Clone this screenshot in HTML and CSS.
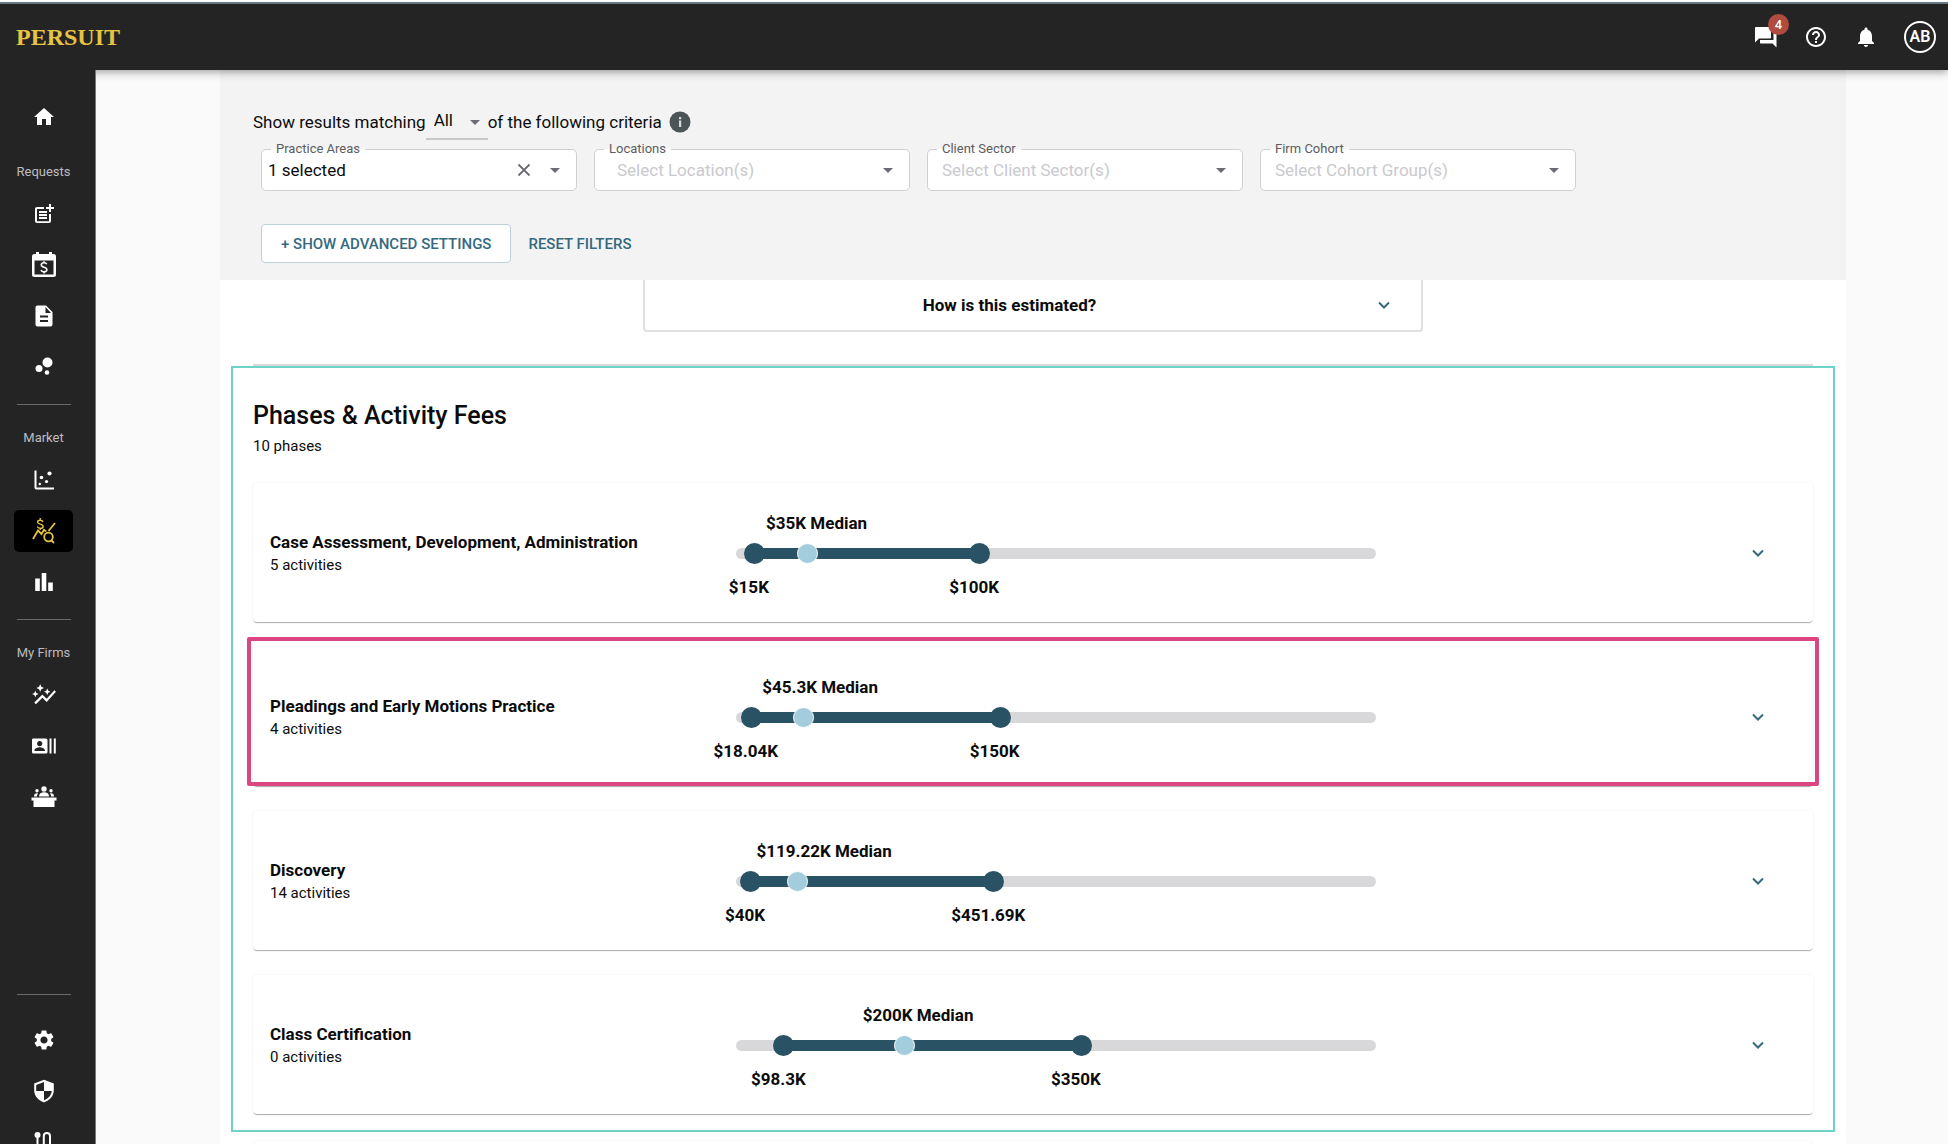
FILE: index.html
```html
<!DOCTYPE html>
<html lang="en">
<head>
<meta charset="utf-8">
<meta name="viewport" content="width=device-width, initial-scale=1">
<title>Persuit – Market Rates</title>
<link rel="stylesheet" href="styles.css">
</head>
<body>
<svg class="sprite" aria-hidden="true">
  <symbol id="chevron" viewBox="0 0 24 24"><path d="M6 9l6 6 6-6" fill="none" stroke="currentColor" stroke-width="2.4"/></symbol>
  <symbol id="arrow" viewBox="0 0 24 24"><path d="M7 10l5 5 5-5z"/></symbol>
</svg>
<div class="app">
  <header class="topbar">
    <a class="logo" href="#">PERSUIT</a>
    <div class="actions">
      <button class="icon-btn" type="button" aria-label="Messages">
        <svg viewBox="0 0 24 24"><path d="M21.500 6h-2v9H6v2.500c0 .550.450 1 1 1h11.500l4 4V7c0-.550-.450-1-1-1zM17 12.500V3c0-.550-.450-1-1-1H2c-.550 0-1 .450-1 1v14.500l4-4h11c.550 0 1-.450 1-1z"/></svg>
        <span class="badge">4</span>
      </button>
      <button class="icon-btn" type="button" aria-label="Help">
        <svg viewBox="0 0 24 24"><path d="M11 18h2v-2h-2v2zm1-16C6.480 2 2 6.480 2 12s4.480 10 10 10 10-4.480 10-10S17.520 2 12 2zm0 18c-4.410 0-8-3.590-8-8s3.590-8 8-8 8 3.590 8 8-3.590 8-8 8zm0-14c-2.210 0-4 1.790-4 4h2c0-1.100.900-2 2-2s2 .900 2 2c0 2-3 1.750-3 5h2c0-2.250 3-2.500 3-5 0-2.210-1.790-4-4-4z"/></svg>
      </button>
      <button class="icon-btn" type="button" aria-label="Notifications">
        <svg viewBox="0 0 24 24"><path d="M12 22c1.100 0 2-.900 2-2h-4c0 1.100.890 2 2 2zm6-6v-5c0-3.070-1.640-5.640-4.500-6.320V4c0-.830-.670-1.500-1.500-1.500s-1.500.670-1.500 1.500v.680C7.630 5.360 6 7.920 6 11v5l-2 2v1h16v-1l-2-2z"/></svg>
      </button>
      <button class="avatar" type="button" aria-label="Account">AB</button>
    </div>
  </header>

  <nav class="sidebar" aria-label="Main">
    <a class="nav-item" href="#" aria-label="Home"><svg viewBox="0 0 24 24"><path d="M10 20v-6h4v6h5v-8h3L12 3 2 12h3v8z"/></svg></a>
    <p class="nav-label">Requests</p>
    <div class="nav-group">
      <a class="nav-item" href="#" aria-label="New request"><svg viewBox="0 0 24 24"><path d="M17 19.220H5V7h7V5H5c-1.100 0-2 .900-2 2v12c0 1.100.900 2 2 2h12c1.100 0 2-.900 2-2v-7h-2v7.220z"/><path d="M19 2h-2v3h-3v2h3v3h2V7h3V5h-3V2zM7 9h8v2H7zM7 12h8v2H7zM7 15h8v2H7z"/></svg></a>
      <a class="nav-item" href="#" aria-label="Billing calendar"><svg class="icon-lg" viewBox="0 0 26 26"><path fill-rule="evenodd" d="M5 0h3v2h10V0h3v2h1.500A2.500 2.500 0 0 1 25 4.500v18a2.500 2.500 0 0 1-2.500 2.500h-19A2.500 2.500 0 0 1 1 22.500v-18A2.500 2.500 0 0 1 3.500 2H5zM3.500 8.500v14h19v-14z"/><path d="M15.700 12.300c-.4-1-1.400-1.500-2.700-1.500-1.600 0-2.700.8-2.700 2.100 0 3 5.600 1.500 5.600 4.700 0 1.400-1.200 2.300-2.900 2.300-1.500 0-2.600-.7-3-1.900M13 9.200v1.800M13 19.800v1.600" fill="none" stroke="currentColor" stroke-width="1.600"/></svg></a>
      <a class="nav-item" href="#" aria-label="Documents"><svg viewBox="0 0 24 24"><path d="M14 1.500H5.500c-1.100 0-2 .900-2 2v17c0 1.100.900 2 2 2h13c1.100 0 2-.900 2-2V8zM16 18H8v-2h8zm0-4.500H8v-2h8zM13.500 9V3l5.500 6z"/></svg></a>
      <a class="nav-item" href="#" aria-label="Insights"><svg viewBox="0 0 24 24"><circle cx="7" cy="13.500" r="3.500"/><circle cx="15" cy="17.500" r="2.300"/><circle cx="15.500" cy="7.500" r="5"/></svg></a>
    </div>
    <hr class="nav-rule">
    <p class="nav-label">Market</p>
    <div class="nav-group">
      <a class="nav-item" href="#" aria-label="Scatter"><svg viewBox="0 0 24 24"><path d="M2.500 2.500h2v17H22v2H4.500a2 2 0 0 1-2-2z"/><circle cx="17.500" cy="5.500" r="2.100"/><circle cx="9.500" cy="9.500" r="1.800"/><circle cx="14.500" cy="13.500" r="1.600"/><circle cx="7.800" cy="16" r="1.200"/></svg></a>
      <a class="nav-item is-active" href="#" aria-current="page" aria-label="Fee estimates"><svg class="icon-lg" viewBox="0 0 26 26" fill="none" stroke="currentColor"><path stroke-width="1.800" d="M2 21l5-8.500 3.500 3.500 3-5M17.500 13l6.500-8"/><path stroke-width="1.400" d="M12.500 12l3 1.500"/><circle cx="17.500" cy="19" r="4.300" stroke-width="1.800"/><path stroke-width="1.800" d="M20 22l3 3"/><path stroke-width="1.400" d="M12 4c-.4-1.200-1.400-1.800-2.800-1.800-1.600 0-2.700.7-2.700 1.900 0 2.700 5.600 1.300 5.600 4.300 0 1.200-1.200 1.900-2.900 1.900-1.500 0-2.600-.6-3-1.700M9.200 0v2.200M9.200 10.300v1.800"/></svg></a>
      <a class="nav-item" href="#" aria-label="Benchmarks"><svg viewBox="0 0 24 24"><path d="M3.200 8.500h4.600v12.500H3.200zM9.700 3h4.600v18H9.700zM16.200 12.500h4.600V21h-4.600z"/></svg></a>
    </div>
    <hr class="nav-rule">
    <p class="nav-label">My Firms</p>
    <div class="nav-group">
      <a class="nav-item" href="#" aria-label="Performance"><svg class="icon-lg" viewBox="0 0 24 24"><path d="M14.060 9.940L12 9l2.060-.940L15 6l.940 2.060L18 9l-2.060.940L15 12zM4 14l.940-2.060L7 11l-2.060-.940L4 8l-.940 2.060L1 11l2.060.940zm4.500-5l1.090-2.410L12 5.500 9.590 4.410 8.500 2 7.410 4.410 5 5.500l2.410 1.090zm-4 11.500l6-6.010 4 4L23 8.930l-1.410-1.410-7.090 7.970-4-4L3 19z"/></svg></a>
      <a class="nav-item" href="#" aria-label="Contacts"><svg viewBox="0 0 24 24"><path fill-rule="evenodd" d="M1 4.500h13a1.500 1.500 0 0 1 1.500 1.500v12a1.500 1.500 0 0 1-1.500 1.500H1.500A1.500 1.500 0 0 1 0 18V6a1.500 1.500 0 0 1 1-1.500zM7.700 7a2.600 2.600 0 1 0 0 5.200A2.600 2.600 0 0 0 7.700 7zM2.500 17h10.400v-.8c0-1.900-3.500-2.900-5.200-2.900s-5.200 1-5.200 2.900zM17.500 4.500h2v15h-2zM21.800 4.500h2v15h-2z"/></svg></a>
      <a class="nav-item" href="#" aria-label="Panels"><svg class="icon-lg" viewBox="0 0 26 26"><circle cx="13" cy="5" r="2.700"/><path d="M8 12.500c0-2.900 2.200-4.200 5-4.200s5 1.300 5 4.200z"/><circle cx="6" cy="6.800" r="1.700"/><circle cx="20" cy="6.800" r="1.700"/><path d="M3 12.500c0-2.400 1.300-3.500 4-3.200-.7.900-1 1.900-1 3.200zM23 12.500c0-2.400-1.300-3.500-4-3.200.7.900 1 1.900 1 3.200zM.5 13.500h25v3h-2V23h-21v-6.500h-2z"/></svg></a>
    </div>
    <div class="nav-bottom">
      <hr class="nav-rule">
      <div class="nav-group">
        <a class="nav-item" href="#" aria-label="Settings"><svg viewBox="0 0 24 24"><path d="M19.140 12.940c.040-.300.060-.610.060-.940 0-.320-.020-.640-.070-.940l2.030-1.580c.180-.140.230-.410.120-.610l-1.920-3.320c-.120-.220-.370-.290-.590-.220l-2.390.960c-.500-.380-1.030-.700-1.620-.940l-.360-2.540c-.040-.240-.240-.410-.480-.410h-3.840c-.240 0-.430.170-.470.410l-.360 2.540c-.590.240-1.130.570-1.620.940l-2.390-.960c-.220-.080-.470 0-.590.220L2.740 8.870c-.120.210-.080.470.120.610l2.030 1.580c-.050.300-.090.630-.090.940s.020.640.070.940l-2.030 1.580c-.180.140-.230.410-.120.610l1.920 3.320c.120.220.370.290.590.220l2.390-.960c.500.380 1.030.700 1.620.940l.360 2.540c.050.240.240.410.480.410h3.840c.240 0 .440-.170.470-.410l.360-2.540c.590-.240 1.130-.560 1.620-.940l2.390.960c.220.080.470 0 .590-.220l1.920-3.320c.120-.220.070-.470-.120-.610zM12 15.600c-1.980 0-3.600-1.620-3.600-3.600s1.620-3.600 3.600-3.600 3.600 1.620 3.600 3.600-1.620 3.600-3.600 3.600z"/></svg></a>
        <a class="nav-item" href="#" aria-label="Security"><svg viewBox="0 0 24 24"><path fill-rule="evenodd" d="M12 .8L2.200 4.600v7c0 5.400 4.200 10 9.800 11.800 5.600-1.800 9.800-6.400 9.800-11.800v-7zM12 3v9h7.800c-.5 4.200-3.600 7.800-7.800 9.200V12H4.200V6z"/><path d="M12 2.500l8 3.300V12h-8z"/></svg></a>
        <a class="nav-item" href="#" aria-label="Workflow"><svg viewBox="0 0 24 24"><circle cx="5.500" cy="5" r="3"/><circle cx="18" cy="19" r="3"/><path d="M5.500 6v11a3.200 3.200 0 0 0 6.300 0V6a3.100 3.100 0 0 1 6.200 0v12" fill="none" stroke="currentColor" stroke-width="2"/></svg></a>
      </div>
    </div>
  </nav>

  <main class="main">
    <div class="panel">
      <form class="filters">
        <div class="match">
          <label for="match-mode">Show results matching</label>
          <span class="match-select">
            <select id="match-mode"><option>All</option><option>Any</option></select>
            <svg><use href="#arrow"/></svg>
          </span>
          <span>of the following criteria</span>
          <svg class="info" viewBox="0 0 22 22"><circle cx="11" cy="11" r="10.500"/><path d="M10 9.500h2.200V16H10zM10 6h2.200v2.200H10z" fill="#d5dadb"/></svg>
        </div>
        <div class="fields">
          <div class="field field-filled">
            <label for="areas">Practice Areas</label>
            <input id="areas" type="text" value="1 selected">
            <button type="button" aria-label="Clear"><svg viewBox="0 0 24 24"><path d="M6.500 6.500l11 11M17.500 6.500l-11 11" fill="none" stroke="currentColor" stroke-width="1.800"/></svg></button>
            <button type="button" aria-label="Open"><svg><use href="#arrow"/></svg></button>
          </div>
          <div class="field field-inset">
            <label for="locations">Locations</label>
            <input id="locations" type="text" placeholder="Select Location(s)">
            <button type="button" aria-label="Open"><svg><use href="#arrow"/></svg></button>
          </div>
          <div class="field">
            <label for="sector">Client Sector</label>
            <input id="sector" type="text" placeholder="Select Client Sector(s)">
            <button type="button" aria-label="Open"><svg><use href="#arrow"/></svg></button>
          </div>
          <div class="field">
            <label for="cohort">Firm Cohort</label>
            <input id="cohort" type="text" placeholder="Select Cohort Group(s)">
            <button type="button" aria-label="Open"><svg><use href="#arrow"/></svg></button>
          </div>
        </div>
        <div class="filter-actions">
          <button class="btn btn-outlined" type="button">+ SHOW ADVANCED SETTINGS</button>
          <button class="btn" type="reset">RESET FILTERS</button>
        </div>
      </form>

      <button class="estimate" type="button">
        <span>How is this estimated?</span>
        <svg class="chevron"><use href="#chevron"/></svg>
      </button>

      <hr class="rule">

      <section class="phases">
        <h2>Phases &amp; Activity Fees</h2>
        <p class="count">10 phases</p>
        <div class="cards">
          <article class="card">
            <div class="card-title"><h3>Case Assessment, Development, Administration</h3><p>5 activities</p></div>
            <div class="range">
              <span class="median" style="left:11.1%">$35K Median</span>
              <div class="track"><div class="fill" style="left:2.8%;width:35.2%"></div></div>
              <input type="range" aria-label="Low fee" step="any" value="2.8">
              <input type="range" aria-label="High fee" step="any" value="38">
              <input class="mid" type="range" aria-label="Median fee" step="any" value="11.1">
              <span class="bound" style="left:2.8%">$15K</span>
              <span class="bound" style="left:38%">$100K</span>
            </div>
            <button class="expand" type="button" aria-label="Expand"><svg class="chevron"><use href="#chevron"/></svg></button>
          </article>
          <article class="card is-highlighted">
            <div class="card-title"><h3>Pleadings and Early Motions Practice</h3><p>4 activities</p></div>
            <div class="range">
              <span class="median" style="left:10.5%">$45.3K Median</span>
              <div class="track"><div class="fill" style="left:2.3%;width:38.9%"></div></div>
              <input type="range" aria-label="Low fee" step="any" value="2.3">
              <input type="range" aria-label="High fee" step="any" value="41.2">
              <input class="mid" type="range" aria-label="Median fee" step="any" value="10.5">
              <span class="bound" style="left:2.3%">$18.04K</span>
              <span class="bound" style="left:41.2%">$150K</span>
            </div>
            <button class="expand" type="button" aria-label="Expand"><svg class="chevron"><use href="#chevron"/></svg></button>
          </article>
          <article class="card">
            <div class="card-title"><h3>Discovery</h3><p>14 activities</p></div>
            <div class="range">
              <span class="median" style="left:9.6%">$119.22K Median</span>
              <div class="track"><div class="fill" style="left:2.2%;width:38%"></div></div>
              <input type="range" aria-label="Low fee" step="any" value="2.2">
              <input type="range" aria-label="High fee" step="any" value="40.2">
              <input class="mid" type="range" aria-label="Median fee" step="any" value="9.6">
              <span class="bound" style="left:2.2%">$40K</span>
              <span class="bound" style="left:40.2%">$451.69K</span>
            </div>
            <button class="expand" type="button" aria-label="Expand"><svg class="chevron"><use href="#chevron"/></svg></button>
          </article>
          <article class="card">
            <div class="card-title"><h3>Class Certification</h3><p>0 activities</p></div>
            <div class="range">
              <span class="median" style="left:26.2%">$200K Median</span>
              <div class="track"><div class="fill" style="left:7.4%;width:46.5%"></div></div>
              <input type="range" aria-label="Low fee" step="any" value="7.4">
              <input type="range" aria-label="High fee" step="any" value="53.9">
              <input class="mid" type="range" aria-label="Median fee" step="any" value="26.2">
              <span class="bound" style="left:7.4%">$98.3K</span>
              <span class="bound" style="left:53.9%">$350K</span>
            </div>
            <button class="expand" type="button" aria-label="Expand"><svg class="chevron"><use href="#chevron"/></svg></button>
          </article>
        </div>
      </section>
      <div class="more"><article class="card"></article></div>
    </div>
  </main>
</div>
</body>
</html>
```

FILE: styles.css
```css
* { box-sizing: border-box; }

body {
  margin: 0;
  font-family: Roboto, "Liberation Sans", sans-serif;
  font-size: 17px;
  color: #0c0c0c;
  background: #fafafa;
}

h2, h3, p, hr { margin: 0; }
button, input, select { font: inherit; color: inherit; }
button { border: 0; padding: 0; background: none; cursor: pointer; }
svg { fill: currentColor; width: 24px; height: 24px; display: block; }
.sprite { display: none; }

.app {
  display: grid;
  grid-template: 70px minmax(0, 1fr) / 96px minmax(0, 1fr);
  height: 100vh;
  overflow: hidden;
}

/* Top bar */
.topbar {
  grid-column: 1 / -1;
  z-index: 2;
  display: flex;
  align-items: center;
  justify-content: space-between;
  padding: 4px 12px 0 16px;
  color: #fff;
  background: linear-gradient(#fafcfd 2px, #687780 2px, #687780 4px, #242424 4px);
  box-shadow: 0 1px 9px rgba(0, 0, 0, .45);
}
.logo {
  font: bold 24px "Liberation Serif", serif;
  color: #e6c443;
  text-decoration: none;
}
.actions { display: flex; align-items: center; gap: 26px; }
.icon-btn { position: relative; }
.badge {
  position: absolute;
  top: -11px;
  left: 14px;
  width: 21px;
  height: 21px;
  border-radius: 50%;
  background: #b04b40;
  font-size: 13px;
  font-weight: 500;
  line-height: 21px;
}
.avatar {
  width: 32px;
  height: 32px;
  border: 2px solid #fff;
  border-radius: 50%;
  font-size: 16px;
  font-weight: 600;
  line-height: 28px;
}

/* Sidebar */
.sidebar {
  z-index: 3;
  display: flex;
  flex-direction: column;
  align-items: flex-start;
  padding: 26px 0 0 14px;
  color: #fff;
  background: #242424;
  border-right: 1px solid #777;
  overflow: hidden;
}
.nav-group { display: flex; flex-direction: column; gap: 9px; }
.nav-item {
  display: grid;
  place-items: center;
  width: 59px;
  height: 42px;
  border-radius: 5px;
  color: inherit;
}
.nav-item.is-active { background: #000; color: #e6c443; }
.nav-item.is-active svg { fill: none; }
.nav-item .icon-lg { width: 26px; height: 26px; }
.nav-label {
  width: 59px;
  margin: 26px 0 13px;
  font-size: 13px;
  line-height: 16px;
  text-align: center;
  color: #bdbdc0;
  white-space: nowrap;
}
.nav-rule {
  width: 54px;
  height: 1px;
  margin: 16px 0 0 3px;
  border: 0;
  background: #6a6a6e;
}
.nav-rule + .nav-label { margin-top: 25px; }
.nav-bottom { margin: auto 0 -19px; }
.nav-bottom .nav-rule { margin-bottom: 24px; }

/* Main panel */
.main {
  padding: 0 102px 0 124px;
  overflow: auto;
  scrollbar-width: none;
}
.panel { min-height: 100%; background: #fff; }

.filters { height: 210px; padding: 32px 33px 0; background: #f3f3f3; }
.match { display: flex; align-items: center; height: 40px; }
.match-select { position: relative; display: block; }
.match-select select {
  display: block;
  width: 62px;
  height: 36px;
  padding: 0 0 2px 8px;
  border: 0;
  border-bottom: 2px solid #c9c9c9;
  background: none;
  appearance: none;
}
.match-select svg {
  position: absolute;
  top: 6px;
  right: 1px;
  color: #6b6b73;
  pointer-events: none;
}
.info { width: 22px; height: 22px; margin-left: 7px; color: #4b5558; }

.fields { display: flex; gap: 17px; padding: 7px 8px 0; }
.field {
  position: relative;
  display: flex;
  align-items: center;
  flex: 0 1 316px;
  height: 42px;
  padding: 0 9px 1px 14px;
  border: 1px solid #d0d0d2;
  border-radius: 5px;
  background: #fff;
  color: #6b6b73;
}
.field-filled { padding-left: 6px; }
.field-inset { padding-left: 22px; }
.field label {
  position: absolute;
  top: -9px;
  left: 9px;
  padding: 0 5px;
  font-size: 13px;
  line-height: 16px;
  background: linear-gradient(#f3f3f3 50%, #fff 50%);
  color: #5c5c61;
}
.field input {
  flex: 1;
  min-width: 0;
  padding: 0;
  border: 0;
  outline: 0;
  background: none;
  color: #0c0c0c;
}
.field input::placeholder { color: #c9c9ce; opacity: 1; }
.field button + button { margin-left: 7px; }

.filter-actions { display: flex; gap: 17px; padding: 33px 8px 0; }
.btn {
  height: 39px;
  font-size: 15px;
  font-weight: 500;
  color: #34697f;
}
.btn-outlined {
  padding: 0 19px;
  border: 1px solid #bdd0d8;
  border-radius: 4px;
  background: #fff;
}

.chevron { width: 20px; height: 20px; color: #34697f; }
.estimate {
  display: flex;
  align-items: center;
  width: 48%;
  height: 52px;
  margin: 0 auto;
  padding: 0 27px 0 0;
  border: 2px solid #e0e0e1;
  border-top: 0;
  border-radius: 0 0 4px 4px;
  font-weight: 700;
}
.estimate span { flex: 1; }

.rule { height: 2px; margin: 32px 33px 0; border: 0; background: #d9d9da; }

/* Phases */
.phases {
  margin: 0 11px;
  padding: 30px 20px 16px;
  border: 2px solid #6ed3c7;
}
.phases h2 { font-size: 25px; font-weight: 500; line-height: 36px; }
.count { font-size: 15px; line-height: 24px; }
.cards { display: grid; gap: 25px; margin-top: 25px; }
.card {
  position: relative;
  display: grid;
  grid-template-columns: 466px minmax(0, 640px) 1fr;
  align-items: center;
  height: 139px;
  padding: 0 45px 0 17px;
  border-radius: 4px;
  background: #fff;
  box-shadow: 0 2px 1px -1px rgba(0, 0, 0, .2), 0 1px 1px rgba(0, 0, 0, .14), 0 0 2px rgba(0, 0, 0, .08);
}
.card.is-highlighted::after {
  content: "";
  position: absolute;
  inset: -10px -6px 0 -6px;
  border: 4px solid #dc4580;
  border-radius: 2px;
  pointer-events: none;
}
.card-title h3 { font-size: 17px; line-height: 24px; }
.card-title p { font-size: 15px; line-height: 22px; }
.expand { justify-self: end; }

.range { position: relative; height: 92px; font-weight: 700; line-height: 24px; }
.track {
  position: relative;
  top: 41px;
  height: 11px;
  border-radius: 6px;
  background: #d8d8da;
}
.fill { position: absolute; height: 11px; background: #295264; }
.range input {
  position: absolute;
  top: 36px;
  left: -10px;
  width: calc(100% + 21px);
  height: 21px;
  margin: 0;
  background: none;
  appearance: none;
  pointer-events: none;
}
.range input::-webkit-slider-thumb {
  width: 21px;
  height: 21px;
  border: 0;
  border-radius: 50%;
  background: #295264;
  appearance: none;
  pointer-events: auto;
}
.range .mid::-webkit-slider-thumb { border: 1px solid #fff; background: #a3cddd; }
.median, .bound { position: absolute; white-space: nowrap; }
.median { top: 4px; margin-left: -41px; }
.bound { bottom: 0; margin-left: -5px; transform: translateX(-50%); }

.more { padding: 9px 34px 0 33px; }
```
